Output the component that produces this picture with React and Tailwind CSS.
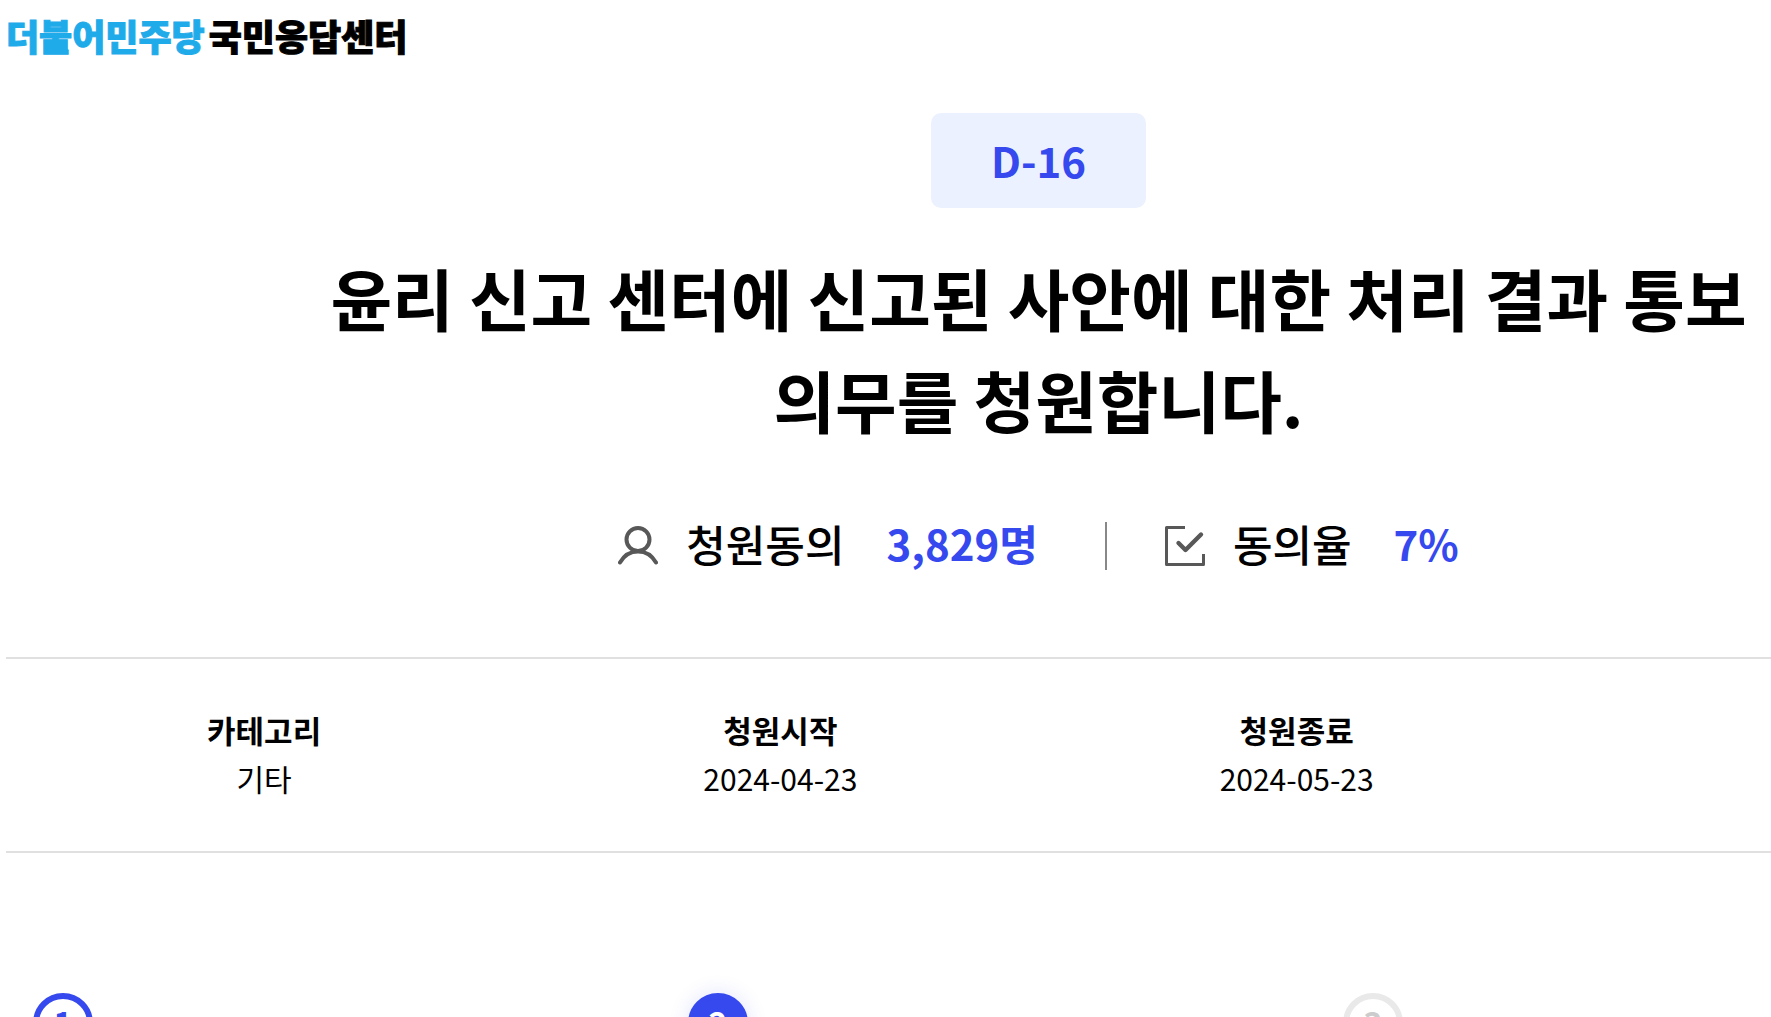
const details = [
  { label: '카테고리', value: '기타' },
  { label: '청원시작', value: '2024-04-23' },
  { label: '청원종료', value: '2024-05-23' },
];

const steps = [
  { number: 1, style: 'border-[#3549ee] bg-white text-[#3549ee]' },
  { number: 2, style: 'border-[#3549ee] bg-[#3549ee] text-white shadow-[0_0_20px_rgba(53,73,238,0.15)]' },
  { number: 3, style: 'border-[#e9e9e9] bg-white text-[#cccccc]' },
];

function PersonIcon() {
  return (
    <svg className="size-10" viewBox="0 0 40 40" fill="none" stroke="#585858" strokeWidth="4" strokeLinecap="round" aria-hidden="true">
      <circle cx="20" cy="13.5" r="11.5" />
      <path d="M2 36.5C6 29.5 12 25.5 20 25.5S34 29.5 38 36.5" />
    </svg>
  );
}

function CheckIcon() {
  return (
    <svg className="size-10" viewBox="0 0 40 40" fill="none" stroke="#585858" strokeLinejoin="round" aria-hidden="true">
      <path d="M20 1.5H1.5V38.5H38.5V28" strokeWidth="3" />
      <path d="M13.5 17L20.5 24L36 8.5" strokeWidth="4.4" strokeLinecap="round" />
    </svg>
  );
}

function Stat({ icon, label, value }) {
  return (
    <div className="flex items-center">
      {icon}
      <dt className="ml-7 pb-1.5 font-medium">{label}</dt>
      <dd className="ml-[42px] pb-1.5 text-[42px] font-bold text-[#3549ee]">{value}</dd>
    </div>
  );
}

export default function App() {
  return (
    <div className="overflow-hidden bg-white pl-1.5 font-['Noto_Sans_CJK_KR',sans-serif] text-black">
      <header className="pt-2.5">
        <a href="#" className="inline-flex h-[50px] items-center gap-1 text-[36px] font-black whitespace-nowrap [-webkit-text-stroke:1px_currentColor]">
          <span className="text-[#1fabe9]">더불어민주당</span>
          <span>국민응답센터</span>
        </a>
      </header>
      <main className="w-[117%]">
        <section className="flex flex-col items-center pt-[53px] pb-[79px]">
          <p className="rounded-[10px] bg-[#ebf1ff] px-15 pt-[15px] pb-[17px] text-[42px] leading-[63px] font-bold text-[#3549ee]">D-16</p>
          <h1 className="mt-[38px] text-center text-[67px] leading-[102px] font-bold">
            윤리 신고 센터에 신고된 사안에 대한 처리 결과 통보
            <br />
            의무를 청원합니다.
          </h1>
          <dl className="mt-16 flex items-center text-[43px] leading-[58px]">
            <Stat icon={<PersonIcon />} label="청원동의" value="3,829명" />
            <div className="mr-[58px] ml-[67px] h-12 w-0.5 bg-[#888888]" />
            <Stat icon={<CheckIcon />} label="동의율" value="7%" />
          </dl>
        </section>
        <dl className="grid grid-cols-4 border-y-2 border-[#e0e0e0] pt-[47px] pb-[49px] text-center">
          {details.map(({ label, value }) => (
            <div key={label} className="leading-[48px]">
              <dt className="text-[31px] font-bold">{label}</dt>
              <dd className="text-[30px]">{value}</dd>
            </div>
          ))}
        </dl>
        <ol className="grid grid-cols-3 pt-[140px] pr-[73px] pl-[27px]">
          {steps.map(({ number, style }) => (
            <li key={number}>
              <span className={`flex size-15 items-center justify-center rounded-full border-6 pb-1 text-[32px] font-bold ${style}`}>
                {number}
              </span>
            </li>
          ))}
        </ol>
      </main>
    </div>
  );
}
